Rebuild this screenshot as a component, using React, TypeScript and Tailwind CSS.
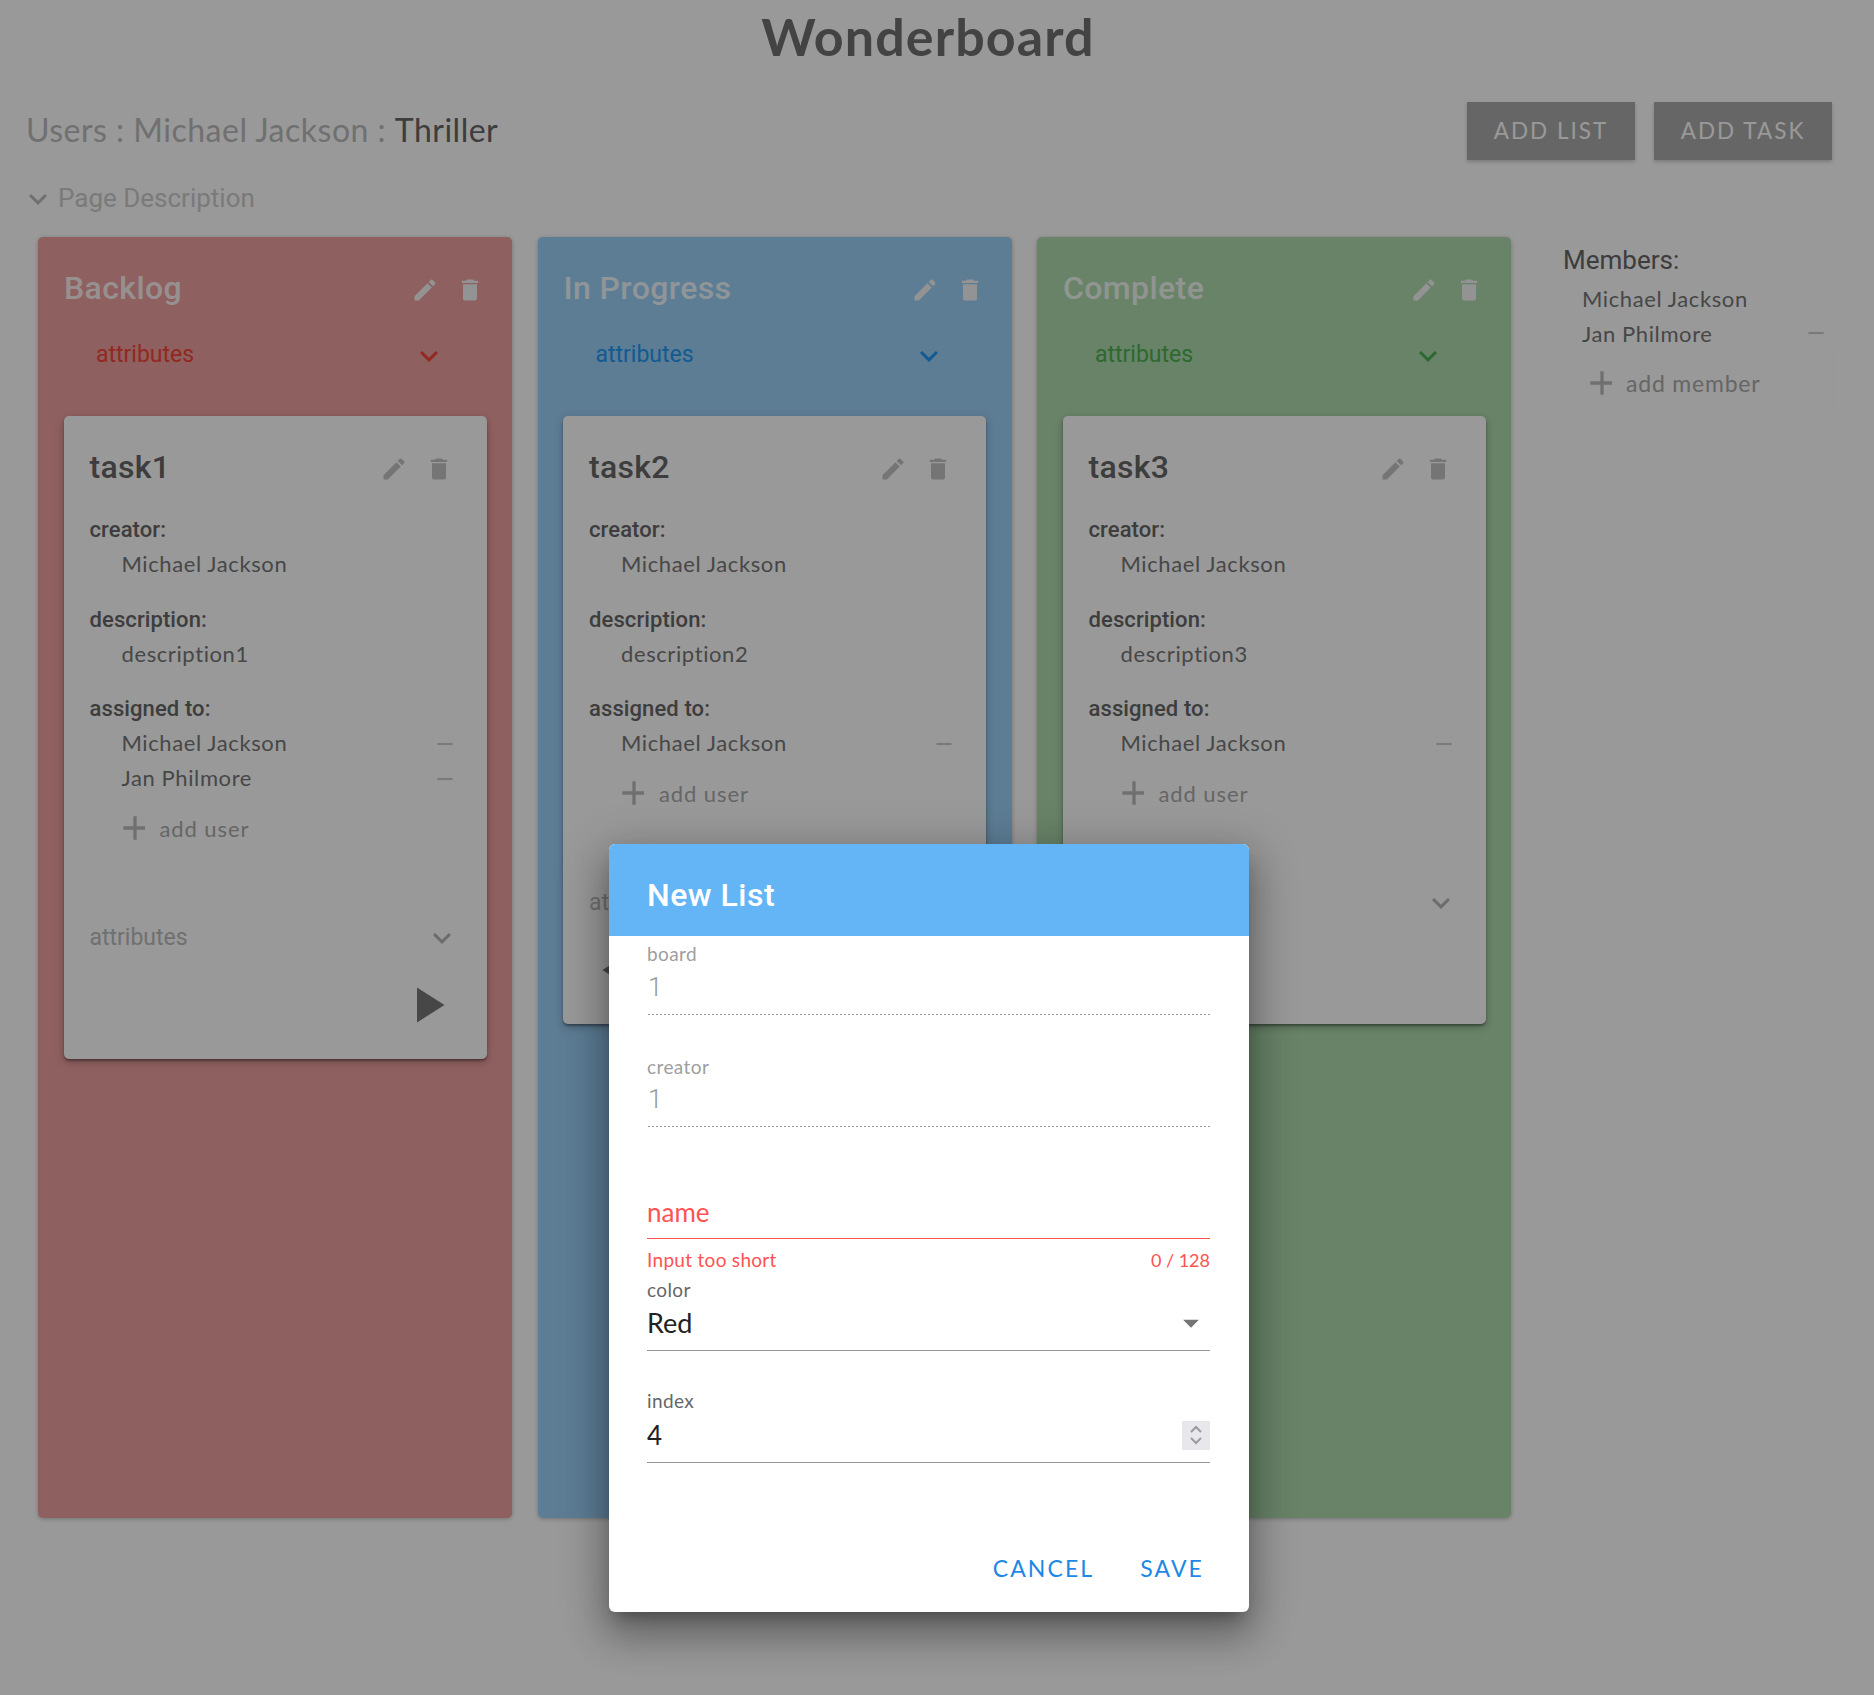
const roboto = "font-['Roboto',sans-serif]"

const Icon = ({ d, size, color }: { d: string; size: number; color: string }) => (
  <svg width={size} height={size} viewBox="0 0 24 24" fill={color} className="shrink-0">
    <path d={d} />
  </svg>
)

const EDIT = "M3 17.25V21h3.75L17.81 9.94l-3.75-3.75L3 17.25zM20.71 7.04a.996.996 0 0 0 0-1.41l-2.34-2.34a.996.996 0 0 0-1.41 0l-1.83 1.83 3.75 3.75 1.83-1.83z"
const TRASH = "M6 19c0 1.1.9 2 2 2h8c1.1 0 2-.9 2-2V7H6v12zM19 4h-3.5l-1-1h-5l-1 1H5v2h14V4z"
const CHEVRON = "M16.59 8.59L12 13.17 7.41 8.59 6 10l6 6 6-6z"
const MINUS = "M19 13H5v-2h14v2z"
const PLUS = "M19 13h-6v6h-2v-6H5v-2h6V5h2v6h5v2z"
const PLAY = "M8 5v14l11-7z"
const BACK = "M16 5v14L5 12z"

const Person = ({ name, removable = true }: { name: string; removable?: boolean }) => (
  <div className="flex h-[35px] items-center justify-between pl-[32px] pr-[4px] text-[22px] tracking-[0.6px] text-[#777]">
    <span className="pb-[2px]">{name}</span>
    {removable && <Icon d={MINUS} size={26} color="#ccc" />}
  </div>
)

const Task = ({ name, desc, users, back, forward }: { name: string; desc: string; users: string[]; back?: boolean; forward?: boolean }) => (
  <div className="ml-[25.5px] w-[423px] rounded-[5px] bg-white pb-[24px] shadow-[0_2px_2px_rgba(0,0,0,0.3),0_3px_8px_rgba(0,0,0,0.25)]">
    <div className="flex h-[76px] items-end justify-between pl-[26px] pr-[34px]">
      <div className={`${roboto} flex h-[50px] items-center text-[32px] font-medium tracking-[0.3px] text-[#666]`}>{name}</div>
      <div className="flex h-[50px] items-center gap-[17px] pt-[4px]">
        <Icon d={EDIT} size={28} color="#c4c4c4" />
        <Icon d={TRASH} size={28} color="#c4c4c4" />
      </div>
    </div>
    <div className="flex flex-col gap-[20px] pl-[26px] pr-[25px] pt-[20px]">
      <div>
        <div className={`${roboto} flex h-[35px] items-center text-[22px] font-medium tracking-[0.1px] text-[#666]`}>creator:</div>
        <Person name="Michael Jackson" removable={false} />
      </div>
      <div>
        <div className={`${roboto} flex h-[35px] items-center text-[22px] font-medium tracking-[0.1px] text-[#666]`}>description:</div>
        <Person name={desc} removable={false} />
      </div>
      <div>
        <div className={`${roboto} flex h-[34px] items-center pb-[2px] text-[22px] font-medium tracking-[0.1px] text-[#666]`}>assigned to:</div>
        {users.map((u) => (
          <Person key={u} name={u} />
        ))}
        <div className="mt-[7px] flex h-[50px] items-center gap-[5px] pl-[25px] text-[22px] tracking-[0.9px] text-[#aaa]">
          <Icon d={PLUS} size={40} color="#bbb" />
          <span>add user</span>
        </div>
      </div>
    </div>
    <div className="mt-[47px] flex h-[76px] items-center justify-between pl-[26px] pr-[27px]">
      <span className={`${roboto} text-[23px] text-[#bbb]`}>attributes</span>
      <Icon d={CHEVRON} size={36} color="#b5b5b5" />
    </div>
    <div className="-mt-[1px] flex h-[60px] items-center justify-between pl-[27px] pr-[30px]">
      {back ? <Icon d={BACK} size={60} color="#777" /> : <span />}
      {forward && <Icon d={PLAY} size={60} color="#777" />}
    </div>
  </div>
)

const List = ({ title, bg, accent, children }: { title: string; bg: string; accent: string; children: React.ReactNode }) => (
  <div className={`h-[1281px] w-[474px] rounded-[5px] ${bg} shadow-[0_1px_4px_rgba(0,0,0,0.25)]`}>
    <div className="flex h-[76px] items-end justify-between pl-[26px] pr-[28px]">
      <div className={`${roboto} flex h-[50px] items-center text-[32px] font-medium tracking-[0.4px] text-[#fff] opacity-85`}>{title}</div>
      <div className="flex h-[50px] items-center gap-[17px] pt-[4px]">
        <Icon d={EDIT} size={28} color="#f5f5f5" />
        <Icon d={TRASH} size={28} color="#f5f5f5" />
      </div>
    </div>
    <div className="mb-[19px] flex h-[84px] items-center justify-between pl-[58px] pr-[65px] pt-[1px]">
      <span className={`${roboto} text-[23px]`} style={{ color: accent }}>attributes</span>
      <Icon d={CHEVRON} size={36} color={accent} />
    </div>
    {children}
  </div>
)

const Label = ({ text, color, h = 36 }: { text: string; color: string; h?: number }) => (
  <div className="flex items-center text-[19px] tracking-[0.4px]" style={{ color, height: h }}>{text}</div>
)

const Dotted = () => (
  <div className="ml-[1px] h-px bg-[linear-gradient(to_right,#999_50%,transparent_50%)] bg-[length:4px_1px]" />
)

export default function App() {
  return (
    <div className="relative h-[1695px] w-full overflow-hidden bg-white font-['Lato',sans-serif]">
      <h1 className="flex h-[78px] items-center justify-center pb-[6px] pr-[18px] text-[52px] font-bold tracking-[1.1px] text-[#707070]">Wonderboard</h1>

      <div className="flex h-[82px] items-end justify-between pl-[26px] pr-[42px]">
        <div className="flex h-[58px] items-center pb-[2px] text-[32px] tracking-[0.5px] text-[#bbb]">
          <span>Users : Michael Jackson :&nbsp;</span>
          <span className="text-[#666]">Thriller</span>
        </div>
        <div className="flex gap-[19px]">
          <div className="flex h-[58px] w-[168px] items-center justify-center bg-[#aaa] pb-[1px] text-[22.5px] tracking-[2px] text-white shadow-[0_2px_4px_rgba(0,0,0,0.2)]">ADD LIST</div>
          <div className="flex h-[58px] w-[178px] items-center justify-center bg-[#aaa] pb-[1px] text-[22.5px] tracking-[2px] text-white shadow-[0_2px_4px_rgba(0,0,0,0.2)]">ADD TASK</div>
        </div>
      </div>

      <div className={`${roboto} flex h-[77px] items-center gap-[2px] pl-[20px] text-[26px] text-[#ccc]`}>
        <Icon d={CHEVRON} size={36} color="#bbb" />
        <span>Page Description</span>
      </div>

      <div className="flex pl-[38px]">
        <div className="flex gap-[25.5px]">
          <List title="Backlog" bg="bg-[#efa0a0]" accent="#f44336">
            <Task name="task1" desc="description1" users={["Michael Jackson", "Jan Philmore"]} forward />
          </List>
          <List title="In Progress" bg="bg-[#9cd0f8]" accent="#2196f3">
            <Task name="task2" desc="description2" users={["Michael Jackson"]} back forward />
          </List>
          <List title="Complete" bg="bg-[#aedbae]" accent="#4caf50">
            <Task name="task3" desc="description3" users={["Michael Jackson"]} back />
          </List>
        </div>

        <div className="ml-[52px] w-[269px]">
          <div className={`${roboto} flex h-[46px] items-center text-[26px] text-[#666]`}>Members:</div>
          <div className="-mt-[2px] flex h-[35px] items-center pl-[19px] text-[22px] tracking-[0.6px] text-[#777]">Michael Jackson</div>
          <div className="flex h-[34px] items-center justify-between pl-[19px] pr-[3px] text-[22px] tracking-[0.6px] text-[#777]">
            <span>Jan Philmore</span>
            <Icon d={MINUS} size={26} color="#ccc" />
          </div>
          <div className="mt-[3px] flex h-[60px] items-center gap-[4px] rounded-[4px] pl-[19px] text-[23px] tracking-[0.8px] text-[#aaa] shadow-[0_0_3px_rgba(0,0,0,0.03)]">
            <Icon d={PLUS} size={40} color="#bbb" />
            <span>add member</span>
          </div>
        </div>
      </div>

      <div className="absolute inset-0 bg-black/40" />

      <div className="absolute left-[609px] top-[844px] h-[768px] w-[640px] overflow-hidden rounded-[6px] bg-white shadow-[0_11px_15px_-7px_rgba(0,0,0,0.3),0_24px_38px_3px_rgba(0,0,0,0.22),0_9px_46px_8px_rgba(0,0,0,0.18)]">
        <div className={`${roboto} flex h-[92px] items-center bg-[#64b5f6] px-[38px] pt-[10px] text-[32px] font-medium tracking-[0.5px] text-white`}>New List</div>
        <div className="pl-[38px] pr-[39px]">
          <Label text="board" color="#9e9e9e" />
          <div className={`${roboto} flex h-[42px] items-center pb-[12px] pl-[1px] text-[26px] font-light text-[#999]`}>1</div>
          <Dotted />

          <div className="mt-[34px]">
            <Label text="creator" color="#9e9e9e" />
          </div>
          <div className={`${roboto} flex h-[41px] items-center pb-[12px] pl-[1px] text-[26px] font-light text-[#999]`}>1</div>
          <Dotted />

          <div className="mt-[68px] flex h-[44px] items-center border-b border-b-[#ff5252] pb-[9px] text-[26px] text-[#ff5252]">name</div>
          <div className="flex h-[43px] items-center justify-between pb-[1px] text-[19px] tracking-[0.3px] text-[#ff5252]">
            <span>Input too short</span>
            <span className="text-[18px] tracking-normal">0 / 128</span>
          </div>

          <div className="-mt-[8px] pt-[1px]">
            <Label text="color" color="#666" h={30} />
          </div>
          <div className="-mt-[1px] flex h-[47px] items-center justify-between border-b border-b-[#949494] pb-[8px] text-[27px] text-[#222]">
            <span>Red</span>
            <Icon d="M7 10l5 5 5-5z" size={38} color="#757575" />
          </div>

          <div className="mt-[35px]">
            <Label text="index" color="#666" h={30} />
          </div>
          <div className="flex h-[47px] items-center justify-between border-b border-b-[#949494] pb-[8px] text-[26px] text-[#222]">
            <span>4</span>
            <div className="flex h-[29px] w-[28px] flex-col items-center justify-center bg-[#e8e8ec]">
              <svg width="14" height="9" viewBox="0 0 14 9" fill="none" stroke="#9a9aa2" strokeWidth="2"><path d="M2 7l5-5 5 5" /></svg>
              <svg width="14" height="9" viewBox="0 0 14 9" fill="none" stroke="#9a9aa2" strokeWidth="2" className="mt-[2px]"><path d="M2 2l5 5 5-5" /></svg>
            </div>
          </div>

          <div className="mt-[88px] flex justify-end gap-[46px] pr-[6px] text-[23px] tracking-[2.1px] text-[#1e88e5]">
            <span>CANCEL</span>
            <span>SAVE</span>
          </div>
        </div>
      </div>
    </div>
  )
}
